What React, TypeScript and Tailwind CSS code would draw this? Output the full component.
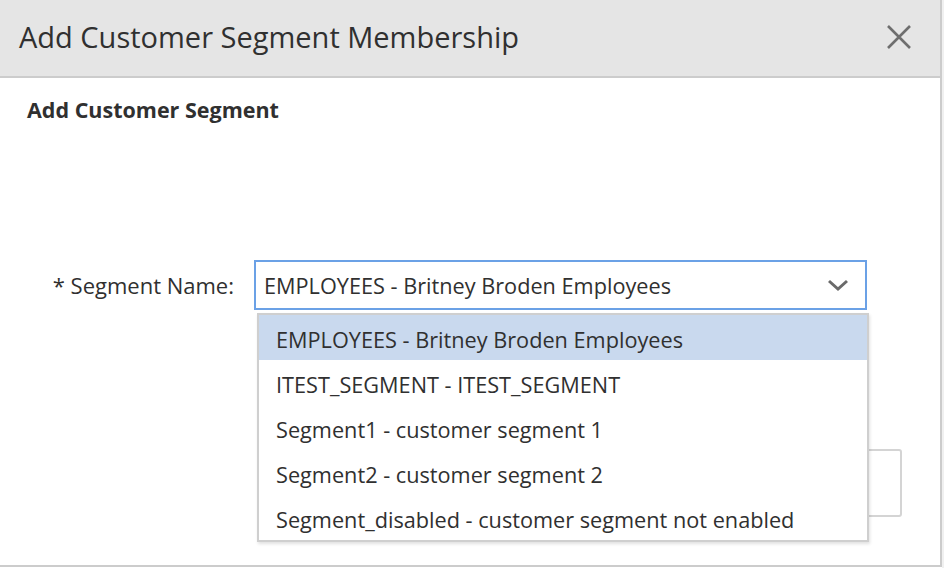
import React from 'react';

const options = [
  'EMPLOYEES - Britney Broden Employees',
  'ITEST_SEGMENT - ITEST_SEGMENT',
  'Segment1 - customer segment 1',
  'Segment2 - customer segment 2',
  'Segment_disabled - customer segment not enabled',
];

export default function App() {
  return (
    <div
      className="flex h-[568px] w-[944px] overflow-hidden bg-white text-[#303030]"
      style={{ fontFamily: '"Open Sans", "Noto Sans", sans-serif' }}
    >
      <div className="flex h-[567px] w-[942px] flex-col border-r-2 border-b-2 border-[#cccccc]">
        <div className="flex h-[78px] shrink-0 items-center justify-between border-b-2 border-[#cccccc] bg-[#e5e5e5] pl-[19px] pr-[28px]">
          <h1 className="pb-[3px] text-[29px] font-normal leading-none text-[#303030]">Add Customer Segment Membership</h1>
          <svg width="26" height="26" viewBox="0 0 26 26" className="mb-[2px] text-[#6e6e6e]">
            <path d="M2 2 L24 24 M24 2 L2 24" stroke="currentColor" strokeWidth="2.6" />
          </svg>
        </div>

        <div className="relative flex-1 pl-[27px] pt-[19px]">
          <h2 className="text-[21.5px] font-bold leading-[26px]">Add Customer Segment</h2>

          <div className="mt-[137px] flex items-center">
            <label className="w-[227px] pr-[20px] text-right text-[22px]">* Segment Name:</label>
            <div className="relative">
              <div className="flex h-[50px] w-[613px] items-center justify-between border-2 border-[#6ba1e6] pl-[8px] pr-[16px] text-[21.7px]">
                <span className="pt-[2px]">EMPLOYEES - Britney Broden Employees</span>
                <svg width="22" height="14" viewBox="0 0 22 14" className="text-[#6a6a6a]">
                  <path d="M2 3 L11 11 L20 3" fill="none" stroke="currentColor" strokeWidth="3" />
                </svg>
              </div>

              <div className="absolute left-[3px] top-[53px] z-10 w-[612px] border-2 border-[#cfcfcf] bg-white shadow-[1px_2px_3px_rgba(0,0,0,0.12)]">
                {options.map((o, i) => (
                  <div
                    key={o}
                    className={`flex h-[45px] items-center pl-[17px] pt-[5px] text-[21.7px] ${i === 0 ? 'bg-[#c9d9ee]' : ''}`}
                  >
                    {o}
                  </div>
                ))}
              </div>
            </div>
          </div>

          <div className="ml-[600px] mt-[139px] h-[68px] w-[275px] rounded-[3px] border-2 border-[#d4d4d4]" />
        </div>
      </div>
      <div className="flex-1 bg-[#f0f0f0]" />
    </div>
  );
}
